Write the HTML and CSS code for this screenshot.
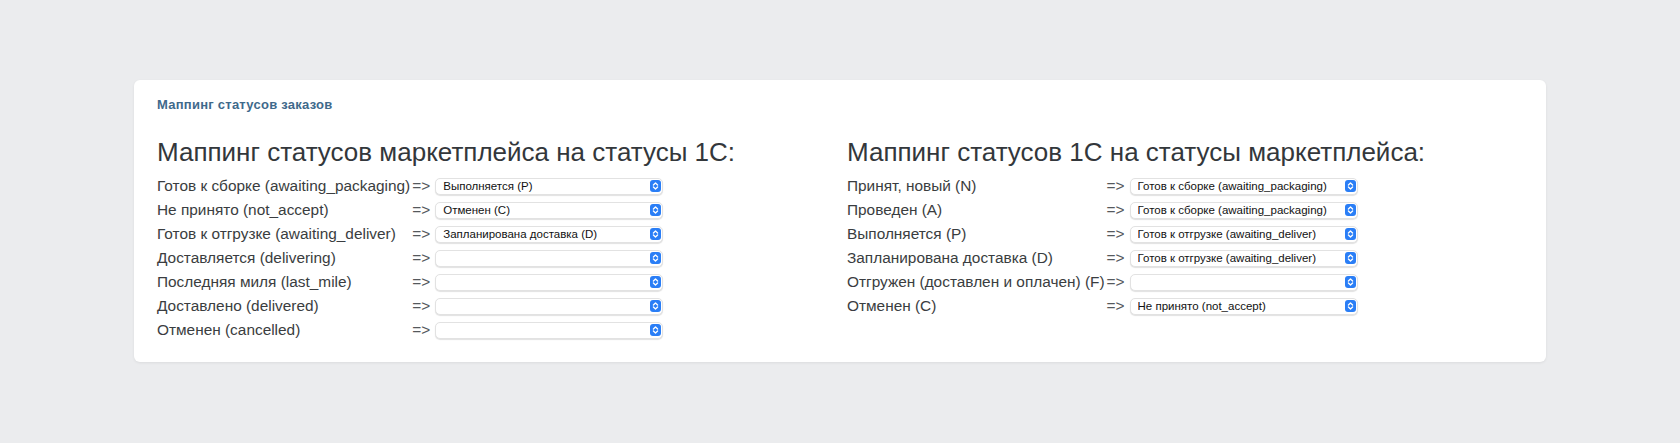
FILE: index.html
```html
<!DOCTYPE html>
<html lang="ru">
<head>
    <meta charset="UTF-8">
    <meta name="viewport" content="width=device-width, initial-scale=1.0">
    <title>Маппинг статусов заказов</title>
    <link rel="stylesheet" href="styles.css">
</head>
<body>
    <div class="card">
        <div class="card-title">Маппинг статусов заказов</div>

        <div class="columns">
            <div class="column">
                <h2>Маппинг статусов маркетплейса на статусы 1С:</h2>
                <table class="mapping">
                    <tr>
                        <td class="label">Готов к сборке (awaiting_packaging)</td>
                        <td class="arrow">=&gt;</td>
                        <td><span class="select"><select>
                            <option></option>
                            <option>Принят, новый (N)</option>
                            <option>Проведен (A)</option>
                            <option selected>Выполняется (P)</option>
                            <option>Запланирована доставка (D)</option>
                            <option>Отгружен (доставлен и оплачен) (F)</option>
                            <option>Отменен (C)</option>
                        </select><svg viewBox="0 0 11 12"><rect width="11" height="12" rx="3"/><path d="M3.4 5 5.5 3 7.6 5M3.4 7 5.5 9 7.6 7"/></svg></span></td>
                    </tr>
                    <tr>
                        <td class="label">Не принято (not_accept)</td>
                        <td class="arrow">=&gt;</td>
                        <td><span class="select"><select>
                            <option></option>
                            <option>Выполняется (P)</option>
                            <option selected>Отменен (C)</option>
                        </select><svg viewBox="0 0 11 12"><rect width="11" height="12" rx="3"/><path d="M3.4 5 5.5 3 7.6 5M3.4 7 5.5 9 7.6 7"/></svg></span></td>
                    </tr>
                    <tr>
                        <td class="label">Готов к отгрузке (awaiting_deliver)</td>
                        <td class="arrow">=&gt;</td>
                        <td><span class="select"><select>
                            <option></option>
                            <option selected>Запланирована доставка (D)</option>
                            <option>Отгружен (доставлен и оплачен) (F)</option>
                        </select><svg viewBox="0 0 11 12"><rect width="11" height="12" rx="3"/><path d="M3.4 5 5.5 3 7.6 5M3.4 7 5.5 9 7.6 7"/></svg></span></td>
                    </tr>
                    <tr>
                        <td class="label">Доставляется (delivering)</td>
                        <td class="arrow">=&gt;</td>
                        <td><span class="select"><select>
                            <option selected></option>
                            <option>Запланирована доставка (D)</option>
                        </select><svg viewBox="0 0 11 12"><rect width="11" height="12" rx="3"/><path d="M3.4 5 5.5 3 7.6 5M3.4 7 5.5 9 7.6 7"/></svg></span></td>
                    </tr>
                    <tr>
                        <td class="label">Последняя миля (last_mile)</td>
                        <td class="arrow">=&gt;</td>
                        <td><span class="select"><select>
                            <option selected></option>
                            <option>Запланирована доставка (D)</option>
                        </select><svg viewBox="0 0 11 12"><rect width="11" height="12" rx="3"/><path d="M3.4 5 5.5 3 7.6 5M3.4 7 5.5 9 7.6 7"/></svg></span></td>
                    </tr>
                    <tr>
                        <td class="label">Доставлено (delivered)</td>
                        <td class="arrow">=&gt;</td>
                        <td><span class="select"><select>
                            <option selected></option>
                            <option>Отгружен (доставлен и оплачен) (F)</option>
                        </select><svg viewBox="0 0 11 12"><rect width="11" height="12" rx="3"/><path d="M3.4 5 5.5 3 7.6 5M3.4 7 5.5 9 7.6 7"/></svg></span></td>
                    </tr>
                    <tr>
                        <td class="label">Отменен (cancelled)</td>
                        <td class="arrow">=&gt;</td>
                        <td><span class="select"><select>
                            <option selected></option>
                            <option>Отменен (C)</option>
                        </select><svg viewBox="0 0 11 12"><rect width="11" height="12" rx="3"/><path d="M3.4 5 5.5 3 7.6 5M3.4 7 5.5 9 7.6 7"/></svg></span></td>
                    </tr>
                </table>
            </div>

            <div class="column">
                <h2>Маппинг статусов 1С на статусы маркетплейса:</h2>
                <table class="mapping">
                    <tr>
                        <td class="label">Принят, новый (N)</td>
                        <td class="arrow">=&gt;</td>
                        <td><span class="select"><select>
                            <option></option>
                            <option selected>Готов к сборке (awaiting_packaging)</option>
                            <option>Готов к отгрузке (awaiting_deliver)</option>
                            <option>Не принято (not_accept)</option>
                        </select><svg viewBox="0 0 11 12"><rect width="11" height="12" rx="3"/><path d="M3.4 5 5.5 3 7.6 5M3.4 7 5.5 9 7.6 7"/></svg></span></td>
                    </tr>
                    <tr>
                        <td class="label">Проведен (A)</td>
                        <td class="arrow">=&gt;</td>
                        <td><span class="select"><select>
                            <option></option>
                            <option selected>Готов к сборке (awaiting_packaging)</option>
                            <option>Готов к отгрузке (awaiting_deliver)</option>
                        </select><svg viewBox="0 0 11 12"><rect width="11" height="12" rx="3"/><path d="M3.4 5 5.5 3 7.6 5M3.4 7 5.5 9 7.6 7"/></svg></span></td>
                    </tr>
                    <tr>
                        <td class="label">Выполняется (P)</td>
                        <td class="arrow">=&gt;</td>
                        <td><span class="select"><select>
                            <option></option>
                            <option>Готов к сборке (awaiting_packaging)</option>
                            <option selected>Готов к отгрузке (awaiting_deliver)</option>
                        </select><svg viewBox="0 0 11 12"><rect width="11" height="12" rx="3"/><path d="M3.4 5 5.5 3 7.6 5M3.4 7 5.5 9 7.6 7"/></svg></span></td>
                    </tr>
                    <tr>
                        <td class="label">Запланирована доставка (D)</td>
                        <td class="arrow">=&gt;</td>
                        <td><span class="select"><select>
                            <option></option>
                            <option selected>Готов к отгрузке (awaiting_deliver)</option>
                            <option>Доставляется (delivering)</option>
                        </select><svg viewBox="0 0 11 12"><rect width="11" height="12" rx="3"/><path d="M3.4 5 5.5 3 7.6 5M3.4 7 5.5 9 7.6 7"/></svg></span></td>
                    </tr>
                    <tr>
                        <td class="label">Отгружен (доставлен и оплачен) (F)</td>
                        <td class="arrow">=&gt;</td>
                        <td><span class="select"><select>
                            <option selected></option>
                            <option>Доставлено (delivered)</option>
                        </select><svg viewBox="0 0 11 12"><rect width="11" height="12" rx="3"/><path d="M3.4 5 5.5 3 7.6 5M3.4 7 5.5 9 7.6 7"/></svg></span></td>
                    </tr>
                    <tr>
                        <td class="label">Отменен (C)</td>
                        <td class="arrow">=&gt;</td>
                        <td><span class="select"><select>
                            <option></option>
                            <option selected>Не принято (not_accept)</option>
                            <option>Отменен (cancelled)</option>
                        </select><svg viewBox="0 0 11 12"><rect width="11" height="12" rx="3"/><path d="M3.4 5 5.5 3 7.6 5M3.4 7 5.5 9 7.6 7"/></svg></span></td>
                    </tr>
                </table>
            </div>
        </div>
    </div>
</body>
</html>
```

FILE: styles.css
```css
body {
    margin: 0;
    padding: 80px 134px;
    background-color: #ebecee;
    font-family: "Liberation Sans", Arial, sans-serif;
    color: #3a3d40;
}

.card {
    background-color: #fff;
    border-radius: 6px;
    box-shadow: 0 1px 3px rgba(0, 0, 0, 0.07);
    padding: 17px 23px 20px;
}

.card-title {
    font-size: 13px;
    line-height: 16px;
    letter-spacing: 0.25px;
    font-weight: bold;
    color: #40698b;
}

.columns {
    display: grid;
    grid-template-columns: 1fr 1fr;
    column-gap: 14px;
    margin-top: 24px;
}

h2 {
    margin: 0 0 7px;
    font-size: 26px;
    line-height: 30px;
    font-weight: normal;
    color: #33373b;
}

.mapping {
    border-collapse: collapse;
}

.mapping td {
    padding: 0;
    height: 24px;
    font-size: 15.4px;
    line-height: 24px;
    white-space: nowrap;
    vertical-align: middle;
}

.mapping .label {
    padding-right: 2px;
}

.mapping .arrow {
    padding-right: 5px;
    color: #55595d;
}

.select {
    position: relative;
    display: block;
    width: 228px;
    height: 17px;
}

.select select {
    appearance: none;
    -webkit-appearance: none;
    display: block;
    width: 100%;
    height: 17px;
    margin: 0;
    padding: 0 18px 0 7px;
    border: 1px solid #e2e2e2;
    border-radius: 5px;
    background-color: #fff;
    box-shadow: 0 1px 1px rgba(0, 0, 0, 0.12);
    font-family: "Liberation Sans", Arial, sans-serif;
    font-size: 11.5px;
    line-height: 15px;
    color: #111;
    outline: none;
}

.select svg {
    position: absolute;
    top: 2px;
    right: 2px;
    width: 11px;
    height: 12px;
    pointer-events: none;
}

.select svg rect {
    fill: #2a7ef6;
}

.select svg path {
    fill: none;
    stroke: #fff;
    stroke-width: 1.3;
    stroke-linecap: round;
    stroke-linejoin: round;
}
```
